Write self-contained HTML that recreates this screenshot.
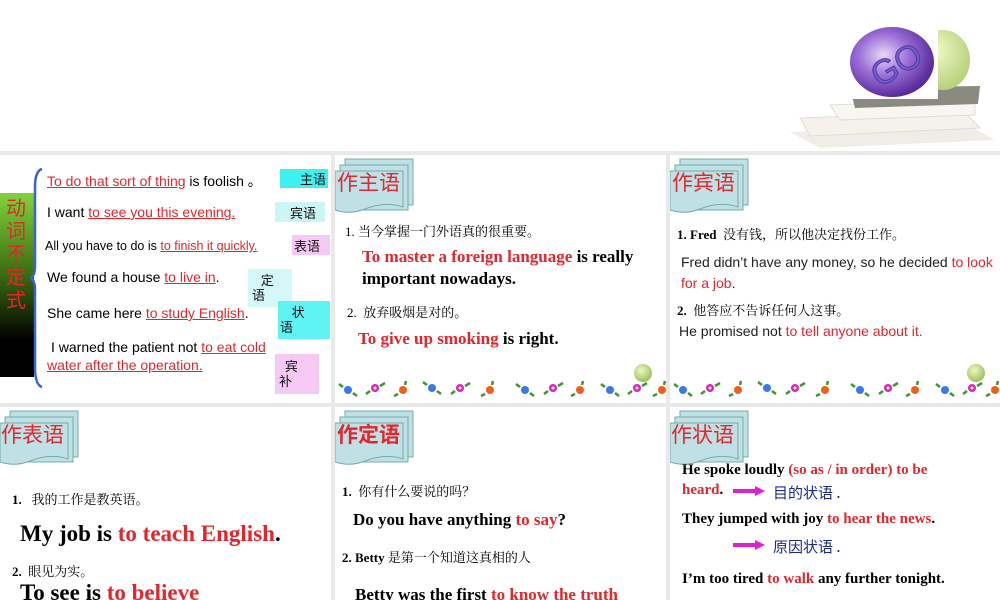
<!DOCTYPE html>
<html><head><meta charset="utf-8"><style>
*{margin:0;padding:0;box-sizing:border-box}
body{width:1000px;height:600px;position:relative;overflow:hidden;background:#e9e9e9;font-family:"Liberation Sans","Noto Sans CJK SC",sans-serif}
.p{position:absolute;background:#fff;overflow:hidden}
.a{position:absolute;white-space:nowrap}
.r{color:#e3262b}
.u{text-decoration:underline}
.s{font-family:"Liberation Serif","Noto Serif CJK SC",serif}
.b{font-weight:bold}
.tag{position:absolute;font-size:13px;color:#111;font-family:"Noto Sans CJK SC",sans-serif;line-height:15px}
.tt{position:absolute;font-size:21px;color:#e3262b;font-family:"Noto Sans CJK SC",sans-serif}
</style></head><body>
<div class="p" style="left:0;top:0;width:1000px;height:151px"></div>
<!-- top right image -->
<svg style="position:absolute;left:780px;top:0" width="220" height="151">
<defs><radialGradient id="g" cx="40%" cy="40%" r="60%"><stop offset="0" stop-color="#e8d8f8"/><stop offset=".5" stop-color="#9b6fd6"/><stop offset="1" stop-color="#5a2c9c"/></radialGradient>
<radialGradient id="ap" cx="40%" cy="35%" r="65%"><stop offset="0" stop-color="#eef7c8"/><stop offset="1" stop-color="#b6d27a"/></radialGradient></defs>
<path d="M10 132 L190 126 L215 140 L40 148Z" fill="#f0ede6"/>
<path d="M20 118 L185 112 L200 128 L30 136Z" fill="#f4f2ea" stroke="#ddd"/>
<path d="M50 105 L195 100 L195 115 L60 120Z" fill="#f7f6f0" stroke="#ddd"/>
<path d="M70 88 L200 86 L198 104 L75 108Z" fill="#8a8a80"/>
<ellipse cx="163" cy="60" rx="27" ry="30" fill="url(#ap)"/>
<rect x="68" y="27" width="90" height="72" fill="#fff"/>
<ellipse cx="112" cy="62" rx="42" ry="35" fill="url(#g)"/>
<text x="88" y="78" font-size="34" font-family="Liberation Sans" fill="#7b5bd0" stroke="#4a3aa0" stroke-width="1" transform="rotate(-30 112 62)">GO</text>
</svg>

<!-- Panel 1 -->
<div class="p" style="left:0;top:155px;width:331px;height:248px">
<div style="position:absolute;left:0;top:38px;width:34px;height:184px;background:linear-gradient(#7fd43a,#3a6a10 45%,#000 80%)"></div>
<div class="a" style="left:6px;top:40px;width:22px;font-size:20px;line-height:23px;color:#e3262b;white-space:normal;font-family:'Noto Sans CJK SC',sans-serif">动词不定式</div>
<svg style="position:absolute;left:30px;top:12px" width="14" height="222"><path d="M12 2 Q5 4 5 20 L5 100 Q5 108 1 111 Q5 114 5 122 L5 200 Q5 218 12 220" fill="none" stroke="#3a63d6" stroke-width="2.5"/></svg>
<div class="a" style="left:47px;top:16px;font-size:14px"><span class="r u">To do that sort of thing</span> is foolish 。</div>
<div class="a" style="left:47px;top:49px;font-size:14px">I want <span class="r u">to see you this evening.</span></div>
<div class="a" style="left:45px;top:84px;font-size:12.5px">All you have to do is <span class="r u">to finish it quickly.</span></div>
<div class="a" style="left:47px;top:114px;font-size:14px">We found a house <span class="r u">to live in</span>.</div>
<div class="a" style="left:47px;top:150px;font-size:14px">She came here <span class="r u">to study English</span>.</div>
<div class="a" style="left:51px;top:183px;font-size:14px;line-height:18px">I warned the patient not <span class="r u">to eat cold</span></div>
<div class="a" style="left:47px;top:201px;font-size:14px;line-height:18px"><span class="r u">water after the operation.</span></div>
<div class="tag" style="left:280px;top:14px;width:48px;height:19px;background:#3ef0ee;padding:2px 0 0 20px">主语</div>
<div class="tag" style="left:275px;top:47px;width:50px;height:20px;background:#ccf6f6;padding:3px 0 0 15px">宾语</div>
<div class="tag" style="left:292px;top:80px;width:38px;height:20px;background:#f6c8f4;padding:3px 0 0 2px">表语</div>
<div class="tag" style="left:248px;top:114px;width:44px;height:38px;background:#d4f8f8;padding:3px 0 0 4px">&nbsp;&nbsp;&nbsp;定<br>语</div>
<div class="tag" style="left:278px;top:146px;width:52px;height:38px;background:#5ef4f4;padding:3px 0 0 2px">&nbsp;&nbsp;&nbsp;&nbsp;状<br>语</div>
<div class="tag" style="left:275px;top:199px;width:44px;height:40px;background:#f6c8f4;padding:4px 0 0 4px">&nbsp;&nbsp;宾<br>补</div>
</div>

<!-- generic tab svg as function repeated -->
<div class="p" style="left:335px;top:155px;width:331px;height:248px">
<svg style="position:absolute;left:0;top:0" width="80" height="62"><path d="M10 4H78V50H10Z" fill="#bfe1e5" stroke="#7aa"/><path d="M5 10H73V55H5Z" fill="#bfe1e5" stroke="#7aa"/><path d="M0 16H68V52Q50 46 30 54Q15 60 0 55Z" fill="#bfe1e5" stroke="#7aa"/></svg>
<div class="tt" style="left:2px;top:12px">作主语</div>
<div class="a s" style="left:10px;top:66px;font-size:13px">1. 当今掌握一门外语真的很重要。</div>
<div class="a s b" style="left:27px;top:91px;font-size:17px;line-height:22px"><span class="r">To master a foreign language</span> is really<br>important nowadays.</div>
<div class="a s" style="left:12px;top:147px;font-size:13px">2.&nbsp; 放弃吸烟是对的。</div>
<div class="a s b" style="left:23px;top:174px;font-size:17px"><span class="r">To give up smoking</span> is right.</div>
</div>

<div class="p" style="left:670px;top:155px;width:330px;height:248px">
<svg style="position:absolute;left:0;top:0" width="80" height="62"><path d="M10 4H78V50H10Z" fill="#bfe1e5" stroke="#7aa"/><path d="M5 10H73V55H5Z" fill="#bfe1e5" stroke="#7aa"/><path d="M0 16H68V52Q50 46 30 54Q15 60 0 55Z" fill="#bfe1e5" stroke="#7aa"/></svg>
<div class="tt" style="left:2px;top:12px">作宾语</div>
<div class="a s" style="left:7px;top:69px;font-size:13px"><b>1. Fred</b>&nbsp; 没有钱，所以他决定找份工作。</div>
<div class="a" style="left:11px;top:97px;font-size:14px;line-height:21px;color:#222">Fred didn’t have any money, so he decided <span class="r">to look</span><br><span class="r">for a job</span>.</div>
<div class="a s" style="left:7px;top:145px;font-size:13px"><b>2.</b>&nbsp; 他答应不告诉任何人这事。</div>
<div class="a" style="left:9px;top:168px;font-size:14px;color:#222">He promised not <span class="r">to tell anyone about it.</span></div>
</div>

<!-- flowers -->
<svg style="position:absolute;left:335px;top:360px" width="665" height="42">
<defs><radialGradient id="ap2" cx="40%" cy="35%" r="65%"><stop offset="0" stop-color="#eef7c8"/><stop offset="1" stop-color="#9cc25a"/></radialGradient>
<g id="fl"><circle cx="0" cy="0" r="4" fill="#e020c0"/><circle cx="0" cy="0" r="1.5" fill="#ffe"/><path d="M5 -2 L10 -5 M-5 3 L-9 6" stroke="#3a9a2a" stroke-width="2.5"/></g>
<g id="fb"><circle cx="0" cy="0" r="4" fill="#3a7ae8"/><path d="M-5 -3 L-9 -6 M5 3 L9 6" stroke="#3a9a2a" stroke-width="2.5"/></g>
<g id="fo"><circle cx="0" cy="0" r="4" fill="#f06018"/><path d="M2 -5 L3 -9 M-5 4 L-9 6" stroke="#3a9a2a" stroke-width="2.5"/></g></defs>
<ellipse cx="308" cy="13" rx="9" ry="9" fill="url(#ap2)"/>
<ellipse cx="641" cy="13" rx="9" ry="9" fill="url(#ap2)"/>
<use href="#fb" x="13" y="30"/><use href="#fl" x="40" y="28"/><use href="#fo" x="68" y="30"/><use href="#fb" x="97" y="28"/><use href="#fl" x="125" y="28"/><use href="#fo" x="155" y="30"/><use href="#fb" x="190" y="30"/><use href="#fl" x="218" y="28"/><use href="#fo" x="245" y="30"/><use href="#fb" x="275" y="30"/><use href="#fl" x="302" y="28"/><use href="#fo" x="327" y="30"/>
<use href="#fb" x="348" y="30"/><use href="#fl" x="375" y="28"/><use href="#fo" x="403" y="30"/><use href="#fb" x="432" y="28"/><use href="#fl" x="460" y="28"/><use href="#fo" x="490" y="30"/><use href="#fb" x="525" y="30"/><use href="#fl" x="553" y="28"/><use href="#fo" x="580" y="30"/><use href="#fb" x="610" y="30"/><use href="#fl" x="637" y="28"/><use href="#fo" x="660" y="30"/>
</svg>

<!-- Row 2 -->
<div class="p" style="left:0;top:407px;width:331px;height:193px">
<svg style="position:absolute;left:0;top:0" width="80" height="62"><path d="M10 4H78V50H10Z" fill="#bfe1e5" stroke="#7aa"/><path d="M5 10H73V55H5Z" fill="#bfe1e5" stroke="#7aa"/><path d="M0 16H68V52Q50 46 30 54Q15 60 0 55Z" fill="#bfe1e5" stroke="#7aa"/></svg>
<div class="tt" style="left:1px;top:12px">作表语</div>
<div class="a s" style="left:12px;top:82px;font-size:13px"><b>1.</b>&nbsp;&nbsp; 我的工作是教英语。</div>
<div class="a s b" style="left:20px;top:114px;font-size:23px">My job is <span class="r">to teach English</span>.</div>
<div class="a s" style="left:12px;top:154px;font-size:13px"><b>2.</b>&nbsp; 眼见为实。</div>
<div class="a s b" style="left:20px;top:173px;font-size:23px">To see is <span class="r">to believe</span></div>
</div>

<div class="p" style="left:335px;top:407px;width:331px;height:193px">
<svg style="position:absolute;left:0;top:0" width="80" height="62"><path d="M10 4H78V50H10Z" fill="#bfe1e5" stroke="#7aa"/><path d="M5 10H73V55H5Z" fill="#bfe1e5" stroke="#7aa"/><path d="M0 16H68V52Q50 46 30 54Q15 60 0 55Z" fill="#bfe1e5" stroke="#7aa"/></svg>
<div class="tt b" style="left:2px;top:12px">作定语</div>
<div class="a s" style="left:7px;top:74px;font-size:13px"><b>1.</b>&nbsp; 你有什么要说的吗？</div>
<div class="a s b" style="left:18px;top:103px;font-size:17px">Do you have anything <span class="r">to say</span>?</div>
<div class="a s" style="left:7px;top:140px;font-size:13px"><b>2. Betty</b> 是第一个知道这真相的人</div>
<div class="a s b" style="left:20px;top:178px;font-size:17px">Betty was the first <span class="r">to know the truth</span></div>
</div>

<div class="p" style="left:670px;top:407px;width:330px;height:193px">
<svg style="position:absolute;left:0;top:0" width="80" height="62"><path d="M10 4H78V50H10Z" fill="#bfe1e5" stroke="#7aa"/><path d="M5 10H73V55H5Z" fill="#bfe1e5" stroke="#7aa"/><path d="M0 16H68V52Q50 46 30 54Q15 60 0 55Z" fill="#bfe1e5" stroke="#7aa"/></svg>
<div class="tt" style="left:1px;top:12px">作状语</div>
<div class="a s b" style="left:12px;top:53px;font-size:15px;line-height:20px">He spoke loudly <span class="r">(so as / in order) to be</span><br><span class="r">heard</span>.</div>
<svg style="position:absolute;left:63px;top:78px" width="34" height="12"><path d="M0 6H24" stroke="#e020d0" stroke-width="4"/><path d="M22 1L32 6L22 11Z" fill="#e020d0"/></svg>
<div class="a" style="left:103px;top:75px;font-size:15px;color:#1a2a8a;font-family:'Noto Sans CJK SC',sans-serif">目的状语 .</div>
<div class="a s b" style="left:12px;top:104px;font-size:15px">They jumped with joy <span class="r">to hear the news</span>.</div>
<svg style="position:absolute;left:63px;top:132px" width="34" height="12"><path d="M0 6H24" stroke="#e020d0" stroke-width="4"/><path d="M22 1L32 6L22 11Z" fill="#e020d0"/></svg>
<div class="a" style="left:103px;top:129px;font-size:15px;color:#1a2a8a;font-family:'Noto Sans CJK SC',sans-serif">原因状语 .</div>
<div class="a s b" style="left:12px;top:164px;font-size:15px">I’m too tired <span class="r">to walk</span> any further tonight.</div>
</div>
</body></html>
